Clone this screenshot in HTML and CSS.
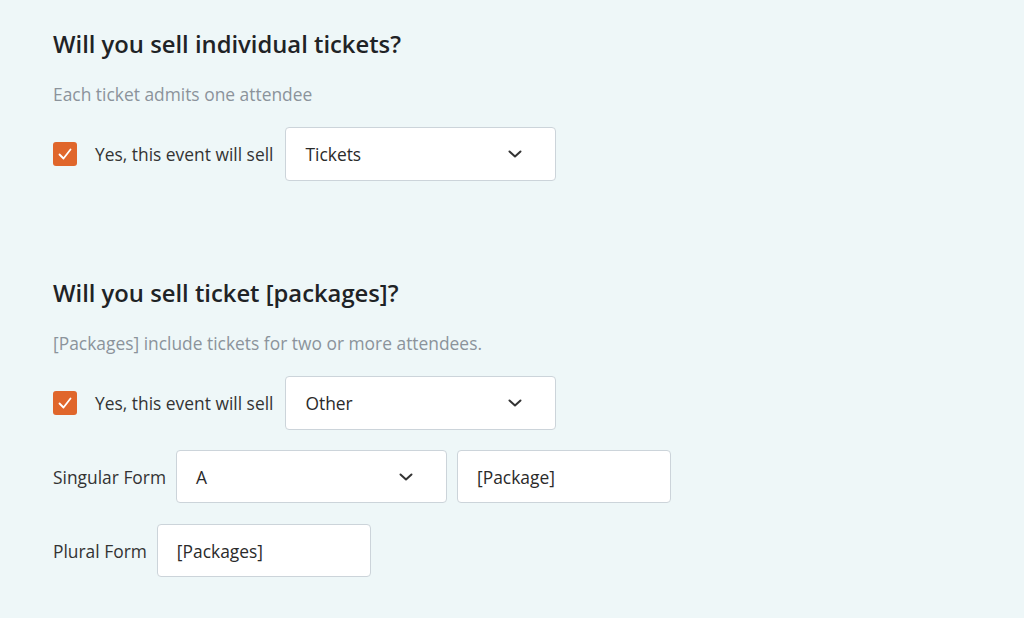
FILE: index.html
```html
<!DOCTYPE html>
<html lang="en">
<head>
<meta charset="utf-8">
<title>Ticket settings</title>
<link rel="stylesheet" href="styles.css">
</head>
<body>
<section class="section">
  <h2 class="title">Will you sell individual tickets?</h2>
  <p class="hint">Each ticket admits one attendee</p>
  <div class="row">
    <span class="check"><svg viewBox="0 0 24 24" width="24" height="24"><path d="M6.5 12.5l4 4 7-9" fill="none" stroke="#fff" stroke-width="1.8" stroke-linecap="round" stroke-linejoin="round"/></svg></span>
    <span class="label label-yes">Yes, this event will sell</span>
    <div class="select wide"><span>Tickets</span><svg class="chev" viewBox="0 0 14 8" width="14" height="8"><path d="M1.5 1.5l5.5 5 5.5-5" fill="none" stroke="#333" stroke-width="2" stroke-linecap="round" stroke-linejoin="round"/></svg></div>
  </div>
</section>
<section class="section second">
  <h2 class="title">Will you sell ticket [packages]?</h2>
  <p class="hint">[Packages] include tickets for two or more attendees.</p>
  <div class="row">
    <span class="check"><svg viewBox="0 0 24 24" width="24" height="24"><path d="M6.5 12.5l4 4 7-9" fill="none" stroke="#fff" stroke-width="1.8" stroke-linecap="round" stroke-linejoin="round"/></svg></span>
    <span class="label label-yes">Yes, this event will sell</span>
    <div class="select wide"><span>Other</span><svg class="chev" viewBox="0 0 14 8" width="14" height="8"><path d="M1.5 1.5l5.5 5 5.5-5" fill="none" stroke="#333" stroke-width="2" stroke-linecap="round" stroke-linejoin="round"/></svg></div>
  </div>
  <div class="row form-row">
    <span class="label">Singular Form</span>
    <div class="select wide short"><span>A</span><svg class="chev" viewBox="0 0 14 8" width="14" height="8"><path d="M1.5 1.5l5.5 5 5.5-5" fill="none" stroke="#333" stroke-width="2" stroke-linecap="round" stroke-linejoin="round"/></svg></div>
    <div class="input short">[Package]</div>
  </div>
  <div class="row form-row">
    <span class="label">Plural Form</span>
    <div class="input short">[Packages]</div>
  </div>
</section>
</body>
</html>
```
FILE: styles.css
```css
html, body {
  margin: 0;
  background: #eef7f8;
}
body {
  padding: 28px 53px;
  font-family: "Open Sans", "Noto Sans", sans-serif;
  color: #333;
}
.section.second {
  margin-top: 96px;
}
.title {
  margin: 0;
  font-size: 23.8px;
  line-height: 32px;
  font-weight: 600;
  color: #1f2326;
}
.hint {
  margin: 22px 0 0;
  font-size: 17.4px;
  line-height: 24px;
  color: #8b939b;
}
.row {
  display: flex;
  align-items: center;
  margin-top: 21px;
  gap: 11px;
}
.row .label-yes {
  margin-right: 1px;
}
.form-row {
  margin-top: 20px;
  gap: 10px;
}
.form-row + .form-row {
  margin-top: 21px;
}
.check {
  width: 24px;
  height: 24px;
  border-radius: 3px;
  background: #e0662b;
  display: flex;
  margin-right: 7px;
}
.label {
  font-size: 17.4px;
  line-height: 24px;
  color: #333;
}
.select, .input {
  box-sizing: border-box;
  height: 54px;
  background: #fff;
  border: 1px solid #ccd4da;
  border-radius: 4px;
  display: flex;
  align-items: center;
  padding: 0 19px;
  font-size: 17.4px;
  color: #2a2a2a;
}
.select {
  justify-content: space-between;
  padding-right: 33px;
}
.wide {
  width: 271px;
}
.input {
  width: 214px;
}
.short {
  height: 53px;
}
.chev {
  display: block;
}
```
